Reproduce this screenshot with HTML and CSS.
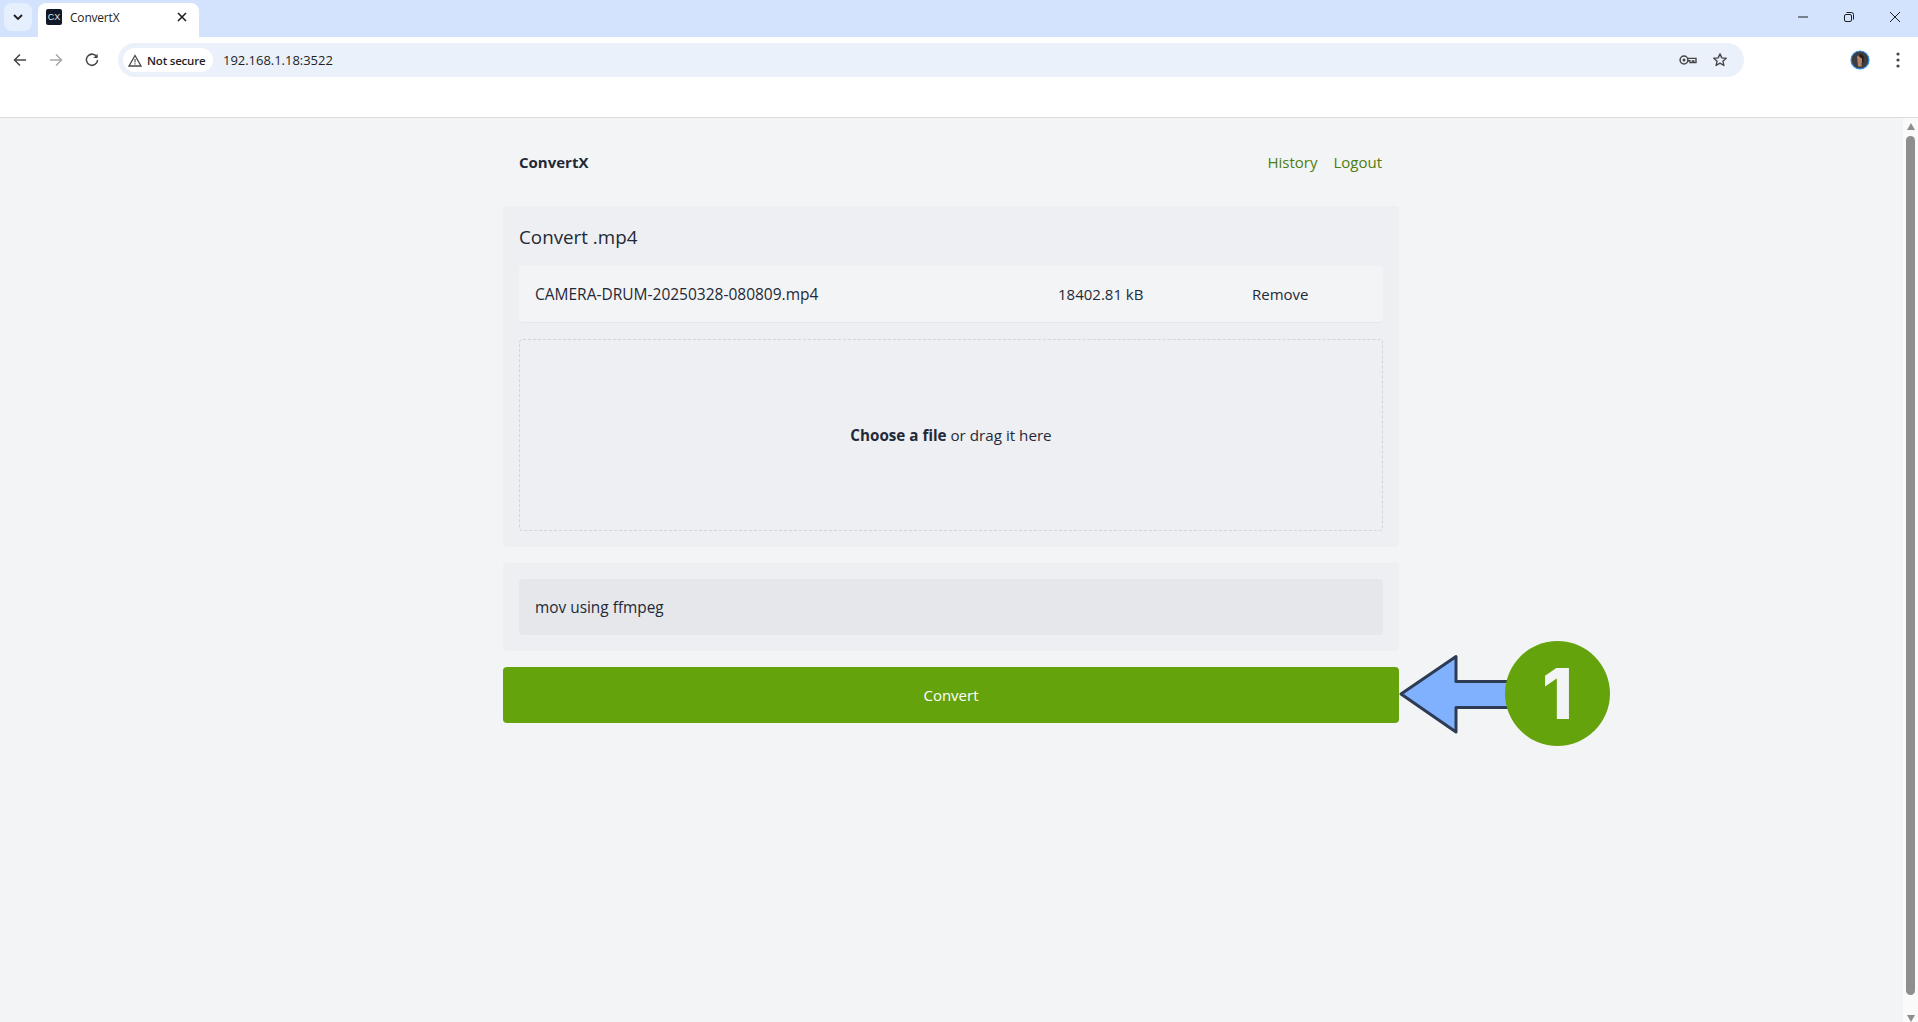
FILE: index.html
```html
<!DOCTYPE html>
<html lang="en">
<head>
<meta charset="utf-8">
<title>ConvertX</title>
<link rel="stylesheet" href="styles.css">
</head>
<body>
<header class="chrome">
  <div class="tabstrip">
    <button class="tablist" aria-label="Search tabs">
      <svg width="12" height="12" viewBox="0 0 12 12"><path d="M2 4l4 4 4-4" fill="none" stroke="#1f1f1f" stroke-width="1.8"/></svg>
    </button>
    <div class="tab">
      <span class="favicon">CX</span>
      <span class="tab-title">ConvertX</span>
      <svg class="tab-close" width="10" height="10" viewBox="0 0 10 10"><path d="M1 1l8 8M9 1l-8 8" stroke="#1f1f1f" stroke-width="1.6"/></svg>
    </div>
    <div class="winctl">
      <svg width="10" height="10" viewBox="0 0 10 10"><path d="M0 5h10" stroke="#1f1f1f" stroke-width="1"/></svg>
      <svg width="10" height="10" viewBox="0 0 10 10"><rect x=".5" y="2.5" width="7" height="7" rx="1.500" fill="none" stroke="#1f1f1f"/><path d="M2.500 .5h5a2 2 0 0 1 2 2v5" fill="none" stroke="#1f1f1f"/></svg>
      <svg width="10" height="10" viewBox="0 0 10 10"><path d="M0 0l10 10M10 0L0 10" stroke="#1f1f1f" stroke-width="1"/></svg>
    </div>
  </div>
  <div class="toolbar">
    <svg class="nav-ico" width="14" height="14" viewBox="0 0 14 14"><path d="M13 7H2M7 1.500L1.500 7 7 12.500" fill="none" stroke="#474747" stroke-width="1.500"/></svg>
    <svg class="nav-ico" width="14" height="14" viewBox="0 0 14 14"><path d="M1 7h11M7 1.500L12.500 7 7 12.500" fill="none" stroke="#a8a8a8" stroke-width="1.500"/></svg>
    <svg class="nav-ico" width="14" height="14" viewBox="0 0 14 14"><path d="M12 4.200A5.600 5.600 0 1 0 12.600 7" fill="none" stroke="#474747" stroke-width="1.500"/><path d="M12.600 .8v4.200H8.400z" fill="#474747"/></svg>
    <div class="omnibox">
      <div class="chip">
        <svg width="14" height="13" viewBox="0 0 14 13"><path d="M7 1.500L13 12H1z" fill="none" stroke="#474747" stroke-width="1.300"/><path d="M7 5v3.400M7 9.300v1.300" stroke="#474747" stroke-width="1.100"/></svg>
        <span>Not secure</span>
      </div>
      <span class="url">192.168.1.18:3522</span>
      <div class="omni-actions">
        <svg width="18" height="12" viewBox="0 0 18 12"><circle cx="5" cy="6" r="3.900" fill="none" stroke="#474747" stroke-width="1.500"/><circle cx="5" cy="6" r="1.500" fill="#474747"/><path d="M8.800 4.400h8.200v4.200h-2.200V7h-1.400v1.600H11V6.800H8.800" fill="none" stroke="#474747" stroke-width="1.400"/></svg>
        <svg width="16" height="16" viewBox="0 0 16 16"><path d="M8 1.900l1.800 4 4.400.4-3.300 2.900 1 4.300L8 11.200l-3.900 2.300 1-4.300-3.300-2.900 4.400-.4z" fill="none" stroke="#474747" stroke-width="1.400" stroke-linejoin="round"/></svg>
      </div>
    </div>
    <div class="avatar">
      <svg width="20" height="20" viewBox="0 0 20 20"><circle cx="10" cy="10" r="9" fill="#3d3d3d" stroke="#2f8fe8" stroke-width="1.200"/><path d="M7 6.500q3-2.500 6 0l.2 5.500-2 1.500.8 3H8l-.4-4z" fill="#b5806a"/><path d="M9 4.500q4-.5 4.800 2.500l-.3 5.500-1.500.5V8.500L9 6.500z" fill="#2a1d18"/></svg>
    </div>
    <svg class="menu" width="4" height="16" viewBox="0 0 4 16"><circle cx="2" cy="2" r="1.600" fill="#474747"/><circle cx="2" cy="8" r="1.600" fill="#474747"/><circle cx="2" cy="14" r="1.600" fill="#474747"/></svg>
  </div>
  <div class="bookmarks"></div>
</header>

<div class="viewport">
  <main class="page">
    <div class="container">
      <nav class="topnav">
        <strong class="brand">ConvertX</strong>
        <div class="links"><a href="#">History</a><a href="#">Logout</a></div>
      </nav>
      <section class="card">
        <h1 class="card-title">Convert .mp4</h1>
        <div class="file-row">
          <span class="cell cell-name">CAMERA-DRUM-20250328-080809.mp4</span>
          <span class="cell">18402.81 kB</span>
          <span class="cell">Remove</span>
        </div>
        <div class="dropzone"><span><b>Choose a file</b> or drag it here</span></div>
      </section>
      <section class="card">
        <div class="target">mov using ffmpeg</div>
      </section>
      <button class="convert">Convert</button>
    </div>
  </main>
  <aside class="scrollbar">
    <i class="arrow-up"></i>
    <i class="thumb"></i>
    <i class="arrow-down"></i>
  </aside>
  <div class="callout">
    <svg class="callout-arrow" width="115" height="84" viewBox="0 0 115 84"><path d="M2 42L57 4.500V29.500H115V55.500H57V80z" fill="#80b1ff" stroke="#2d3b55" stroke-width="3" stroke-linejoin="round"/></svg>
    <div class="badge">1</div>
  </div>
</div>
</body>
</html>
```

FILE: styles.css
```css
* { box-sizing: border-box; }
html, body { margin: 0; height: 100%; overflow: hidden; }
body {
  display: flex;
  flex-direction: column;
  background: #f3f4f6;
  color: #1f2937;
  font-family: "Open Sans", "Noto Sans", sans-serif;
  font-size: 15.2px;
}

/* Browser frame */
.chrome { flex: none; background: #fff; border-bottom: 1px solid #dcdcdc; height: 118px; }
.tabstrip {
  height: 37px;
  background: #d3e3fd;
  display: flex;
  align-items: flex-end;
}
.tablist {
  width: 28px; height: 28px;
  margin: 0 6px 6px 4px;
  border: 0; border-radius: 8px;
  background: #e6effd;
  display: flex; align-items: center; justify-content: center;
  padding: 0;
}
.tab {
  width: 161px; height: 34px;
  background: #fff;
  border-radius: 8px 8px 0 0;
  display: flex; align-items: center;
  padding: 0 12px 6px 8px;
}
.favicon {
  width: 16px; height: 16px;
  border-radius: 2px;
  background: #111827;
  color: #e5e7eb;
  font: 9px/16px "Liberation Sans", sans-serif;
  text-align: center;
}
.tab-title { font: 12px "Open Sans", sans-serif; color: #1f1f1f; margin-left: 8px; flex: 1; letter-spacing: -.2px; }
.tab-close { flex: none; }
.winctl {
  margin-left: auto;
  width: 120px;
  height: 100%;
  display: flex;
  justify-content: space-between;
  padding: 12px 18px 0 0;
  align-items: flex-start;
}
.toolbar {
  height: 43px;
  background: #fff;
  border-radius: 8px 8px 0 0;
  display: flex;
  align-items: center;
  padding-top: 3px;
}
.nav-ico { flex: none; margin-left: 13px; }
.nav-ico + .nav-ico { margin-left: 22px; }
.omnibox {
  margin-left: 19px;
  width: 1626px; height: 34px;
  border-radius: 17px;
  background: #ebf1fa;
  display: flex; align-items: center;
  padding-left: 5px;
}
.chip {
  width: 90px; height: 24px;
  border-radius: 12px;
  background: #fff;
  display: flex; align-items: center; gap: 5px;
  padding-left: 5px;
  font-size: 11.5px; font-weight: 600;
  color: #1f1f1f;
  letter-spacing: -.2px;
}
.url { margin-left: 10px; font-size: 13px; color: #1f1f1f; letter-spacing: -.03px; }
.omni-actions { margin-left: auto; display: flex; align-items: center; gap: 15px; padding-right: 16px; }
.avatar { margin-left: 106px; width: 20px; height: 20px; }
.avatar svg { display: block; }
.menu { margin-left: 26px; }
.bookmarks { height: 37px; }

/* Page */
.viewport { flex: 1; display: flex; position: relative; min-height: 0; }
.page { flex: 1; min-width: 0; padding-right: 1px; }
.container { width: 896px; margin: 0 auto; }
.topnav {
  height: 88px;
  padding: 0 17px 0 16px;
  display: flex; align-items: center; justify-content: space-between;
}
.brand { color: #1f2937; font-weight: 700; font-size: 15px; }
.links { display: flex; gap: 16px; }
.links a { color: #4d7c0f; text-decoration: none; font-size: 15px; }
.card {
  background: #eeeff3;
  border-radius: 4px;
  padding: 16px;
  margin-bottom: 16px;
}
.card-title { margin: 1px 0 15px; font-size: 18.8px; line-height: 28px; font-weight: 400; color: #1f2937; }
.file-row {
  height: 57px;
  background: #f3f4f6;
  border-radius: 4px;
  border-bottom: 1px solid #e5e7eb;
  display: grid;
  grid-template-columns: 523px 194px 1fr;
  align-items: center;
  margin-bottom: 16px;
}
.cell { padding-left: 16px; font-size: 15px; }
.cell-name { font-size: 15.5px; }
.dropzone {
  height: 192px;
  border: 1px dashed #d1d5db;
  border-radius: 4px;
  display: flex; align-items: center; justify-content: center;
}
.dropzone b { color: #1f2937; font-weight: 700; }
.target {
  height: 56px;
  background: #e5e7eb;
  border-radius: 4px;
  padding-left: 16px;
  display: flex; align-items: center;
  font-size: 15.4px;
}
.convert {
  display: block;
  width: 100%; height: 56px;
  border: 0; border-radius: 4px;
  background: #65a30d;
  color: #fff;
  font-family: inherit;
  font-size: 15px;
}

/* Scrollbar */
.scrollbar {
  flex: none; width: 15px;
  background: #fafafa;
  display: flex; flex-direction: column; align-items: center;
  padding-top: 5px;
}
.arrow-up { width: 0; height: 0; border: 4.500px solid transparent; border-top: 0; border-bottom: 7px solid #8e8e8e; }
.thumb { width: 9px; height: 862px; margin-top: 6px; border-radius: 5px; background: #8e8e8e; }
.arrow-down { width: 0; height: 0; margin-top: 20px; border: 4.500px solid transparent; border-bottom: 0; border-top: 7px solid #8e8e8e; }

/* Annotation laid over the page */
.callout {
  position: absolute;
  left: 1399px; top: 523px;
  display: flex; align-items: center;
}
.callout-arrow { display: block; }
.badge {
  width: 105px; height: 105px;
  margin-left: -9px;
  border-radius: 50%;
  background: #65a30d;
  color: #f3f4f6;
  font: 800 70px/105px Inter, sans-serif;
  text-align: center;
}
```
